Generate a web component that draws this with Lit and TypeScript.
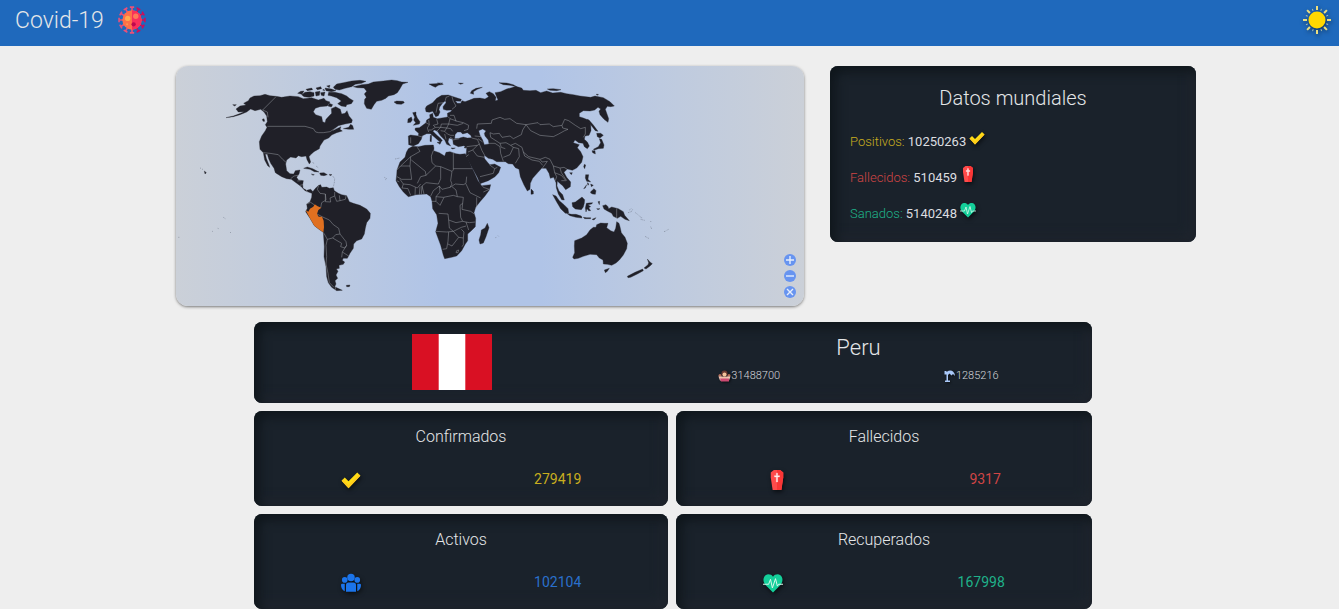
import { LitElement, html, svg, css } from "lit";
import { customElement, property } from "lit/decorators.js";

const LAND = [
  // North and Central America
  "M168 173L190 168 212 160 222 155 205 156 198 147 210 138 228 135 221 130 235 122 240 114 252 108 270 107 285 103 300 107 318 109 335 112 360 108 385 110 400 116 425 113 445 120 462 115 468 122 480 126 472 138 450 140 436 145 430 155 437 164 455 170 458 185 465 188 468 178 475 170 485 160 484 146 497 140 511 148 515 162 525 160 531 152 537 168 547 180 545 188 525 192 505 197 495 205 487 213 500 206 513 200 510 208 517 213 500 218 485 225 476 234 462 240 450 258 448 266 432 275 421 285 417 290 422 306 418 312 411 299 408 288 395 290 385 287 378 294 362 291 350 300 347 312 350 332 360 341 371 342 376 332 390 330 387 342 380 352 385 360 400 362 398 374 399 385 410 391 422 388 429 395 425 400 415 396 405 392 394 380 378 368 364 358 350 356 335 350 316 338 312 325 302 310 296 296 292 283 286 282 289 295 297 315 299 322 293 317 284 300 280 278 270 268 268 245 275 228 286 212 291 202 286 194 292 185 290 168 282 156 272 148 255 152 242 147 230 156 210 164 190 170Z",
  // South America
  "M426 398L435 386 446 376 452 374 455 382 470 381 478 385 490 383 493 392 505 400 515 404 530 407 538 425 550 430 570 436 590 447 601 460 600 475 590 488 586 505 583 522 575 537 560 542 551 552 550 565 540 580 532 595 520 595 517 601 524 606 520 613 507 616 508 625 499 627 504 634 498 645 503 655 495 662 498 672 494 680 517 691 500 692 485 682 475 668 470 650 468 620 462 590 463 560 460 517 447 508 433 497 420 475 407 455 412 445 410 432 420 425 425 412Z",
  "M529 676L540 675 538 680 530 680Z",
  // Caribbean
  "M401 325L412 321 428 326 437 331 447 336 433 335 420 328ZM449 339L462 338 472 344 462 347 452 346ZM424 342L433 344 429 346ZM478 343L486 344 480 347Z",
  // Hawaii
  "M103 333L109 338 105 342Z",
  // Arctic archipelago
  "M383 100L392 94 402 93 396 103ZM395 104L405 97 420 95 432 98 432 108 418 112 402 110ZM408 88L425 84 428 89 412 92ZM438 84L452 80 455 86 442 89ZM436 96L450 94 448 106 438 108ZM452 98L465 96 462 108 454 106ZM465 84L485 87 498 92 484 95 468 92ZM470 78L480 76 478 83ZM476 97L495 97 515 101 530 108 538 115 550 122 544 131 530 134 528 140 514 138 503 131 514 123 500 113 484 108 474 106ZM478 130L488 134 484 141 474 138ZM490 82L500 72 520 68 545 63 570 61 588 64 575 70 556 73 545 80 525 85 508 90 495 88ZM458 90L462 88 464 92ZM520 206L537 208 551 208 548 197 542 193 536 202ZM277 178L282 176 284 184 279 184ZM188 134L199 134 194 138Z",
  // Greenland, Iceland, Svalbard
  "M582 84L562 83 550 80 575 74 595 72 610 66 640 63 665 60 682 62 695 66 714 67 698 72 690 86 682 98 672 104 655 108 648 115 635 121 620 124 612 134 604 148 590 145 583 131 584 118 589 112 583 102 590 94Z",
  "M672 126L680 123 700 124 703 128 694 133 680 132ZM777 72L795 71 812 70 820 73 805 76 796 82 786 77ZM802 69L818 69 814 72Z",
  // Great Britain, Ireland
  "M728 158L738 156 738 164 742 174 750 185 748 192 730 196 737 188 731 180 734 172ZM714 177L724 171 727 180 722 187 713 188Z",
  // Eurasia
  "M715 228L722 225 745 228 746 220 735 210 736 204 748 203 758 196 768 188 770 180 780 174 779 164 788 160 790 172 802 176 820 173 833 171 832 160 842 155 846 150 830 151 820 148 819 140 828 128 826 122 818 129 809 141 807 149 810 156 805 167 797 170 793 163 788 154 778 157 768 155 766 145 770 138 788 128 800 115 815 106 835 105 850 110 874 118 872 124 856 123 862 130 872 130 876 122 885 125 897 121 912 115 930 114 945 117 956 110 948 100 958 95 970 101 978 112 976 122 984 120 978 106 975 98 992 95 1010 87 1025 83 1037 79 1055 84 1060 91 1080 92 1098 91 1112 98 1130 93 1148 99 1172 97 1190 101 1210 104 1230 108 1262 112 1275 108 1300 113 1320 125 1333 138 1322 140 1312 139 1306 148 1311 162 1316 176 1314 187 1302 178 1290 164 1287 154 1292 147 1284 142 1274 150 1260 153 1240 152 1228 160 1228 170 1240 174 1255 180 1262 192 1263 212 1257 226 1245 228 1243 238 1252 246 1258 258 1252 266 1243 260 1239 250 1226 248 1215 240 1210 248 1228 254 1222 263 1232 275 1239 290 1235 307 1220 324 1207 331 1192 327 1182 337 1190 352 1202 366 1201 380 1187 389 1178 377 1169 370 1162 363 1161 378 1167 393 1178 404 1183 420 1175 419 1165 402 1159 384 1158 368 1151 352 1141 355 1137 340 1128 325 1115 325 1104 337 1088 355 1081 370 1080 388 1072 393 1062 375 1051 350 1047 328 1036 323 1028 312 1015 311 1006 305 980 305 968 298 955 295 942 285 944 296 955 310 960 314 974 312 992 322 986 338 975 350 955 362 930 371 922 352 908 326 895 302 888 290 890 264 882 257 865 260 850 253 848 238 837 234 834 246 842 258 830 253 824 240 812 228 802 214 794 210 788 213 800 225 813 236 817 242 811 247 803 240 792 230 781 221 770 221 757 227 754 238 745 251 730 258 716 254ZM855 224L862 216 872 216 878 222 892 218 902 226 905 233 892 234 880 231 866 235 854 236ZM926 212L938 207 948 213 943 220 945 228 955 240 957 252 943 254 938 240 930 226Z",
  // Mediterranean islands
  "M781 226L785 226 784 245 780 244ZM801 247L813 246 810 253ZM843 264L856 264 848 267ZM882 262L890 259 886 265Z",
  // Russian Arctic islands
  "M901 100L905 92 918 85 937 82 922 88 910 95 911 103ZM987 68L1010 69 1030 74 1040 80 1020 76 1000 74ZM1132 87L1150 86 1173 89 1160 92 1140 91ZM1278 103L1285 103 1284 106ZM865 69L880 70 872 73Z",
  // Sakhalin, Japan
  "M1252 178L1257 180 1270 195 1284 214 1276 212 1262 194ZM1280 220L1292 220 1300 226 1290 234 1282 230ZM1288 236L1295 238 1302 255 1300 265 1285 266 1274 270 1270 268 1285 260 1292 248ZM1266 272L1275 272 1276 282 1268 278Z",
  // Taiwan, Hainan, Sri Lanka
  "M1243 313L1247 315 1244 326 1241 320ZM1199 338L1207 338 1204 344ZM1083 387L1090 394 1090 402 1083 403Z",
  // Philippines
  "M1247 344L1256 344 1254 358 1262 366 1250 364 1246 354ZM1262 372L1270 376 1264 380ZM1252 368L1257 372 1254 376ZM1262 395L1272 386 1278 392 1276 403 1268 402 1262 399ZM1241 386L1250 374 1246 384Z",
  // Indonesia and New Guinea
  "M1148 404L1158 408 1168 422 1182 434 1194 446 1196 459 1186 460 1172 446 1160 426ZM1190 460L1205 463 1218 463 1234 468 1236 474 1218 472 1200 467ZM1206 428L1216 426 1227 418 1236 411 1244 419 1243 430 1240 441 1234 449 1216 447 1208 440ZM1249 430L1255 429 1268 428 1265 432 1254 434 1262 440 1256 443 1262 452 1256 452 1251 446 1248 456 1246 444ZM1240 472L1250 473 1262 473 1262 476 1244 476ZM1266 478L1278 473 1272 480ZM1284 425L1289 424 1288 434ZM1280 446L1290 446 1284 449Z",
  "M1298 437L1308 434 1314 440 1316 446 1325 441 1345 446 1360 455 1364 466 1378 482 1365 478 1352 469 1342 475 1330 469 1325 460 1312 453 1302 447Z",
  // Australia, Tasmania, New Zealand
  "M1214 542L1235 534 1250 524 1260 510 1270 502 1278 502 1280 494 1292 489 1304 490 1314 490 1310 503 1322 512 1332 516 1337 505 1340 485 1347 490 1350 500 1354 518 1365 532 1372 550 1370 566 1360 585 1348 600 1338 609 1325 616 1312 613 1300 612 1299 600 1288 594 1280 584 1260 583 1240 589 1225 595 1212 597 1208 592 1214 578 1213 558Z",
  "M1303 630L1318 625 1312 634 1306 638ZM1372 649L1395 637 1418 627 1420 632 1402 642 1382 652 1374 653ZM1422 624L1434 614 1436 608 1432 597 1440 606 1447 611 1440 618 1428 627Z",
  // Africa and Madagascar
  "M715 266L728 259 745 260 765 256 790 255 792 264 791 272 808 278 824 288 828 277 840 275 858 281 870 283 886 281 894 296 905 322 914 340 924 362 935 377 962 374 958 390 945 408 930 425 917 442 912 458 917 475 916 500 904 512 893 522 893 542 886 552 875 572 860 588 845 592 824 596 820 586 812 556 797 515 804 490 800 464 788 446 786 424 782 410 770 402 755 403 738 404 715 410 700 396 688 380 678 362 680 345 681 330 690 306 705 292 709 277Z",
  "M952 490L957 503 948 530 940 549 930 552 927 540 932 524 934 510 945 504Z",
];

// Small island groups, drawn as faint marks
const ISLETS =
  "M96 327L100 329M90 324L93 325M126 513L130 516M160 472L166 476M143 505L146 506M180 517L183 518M25 532L28 532M428 306L432 312M438 318L446 324M488 348L494 356 493 368 490 380M643 352L650 356 645 360M675 297L690 294M976 533L980 532M984 527L986 529M1374 458L1384 455 1388 448M1378 450L1384 446M1396 458L1404 464M1406 466L1414 473 1418 474M1412 478L1424 481M1442 483L1443 488M1442 500L1445 507M1425 529L1432 533 1438 536M1482 515L1488 513M1490 511L1496 508";

const PERU = "M407 451L415 455 420 446 430 440 434 433 443 439 454 443 445 450 441 462 446 470 456 470 461 482 462 502 460 517 447 508 433 497 420 475Z";

const BORDERS = [
  "M278 150L318 110M278 150L292 156 294 172M292 199L405 199 430 206 437 216 446 218 460 218 480 215 494 206",
  "M280 278L300 280 325 284 338 298 348 307M362 356L372 348 384 346M382 363L392 362M390 376L398 374M409 390L412 397",
  "M446 377L442 388 450 400 466 402 468 420 455 428 452 443M410 432L422 427 432 434M466 402L466 425 482 426 480 414 494 408 494 396M494 408L500 424 510 422 508 406M510 422L526 418 528 408M441 462L456 470 478 480 490 494 506 505 510 522 497 524 488 534 472 538 462 520M488 534L515 550 512 560 524 564 530 556 528 545 510 522M530 556L517 576 515 592M517 576L536 588M472 538L468 556 470 590 468 612 474 640 478 668 492 682M498 678L495 690",
  // Africa
  "M722 290L750 274 742 262M722 290L692 318M680 330L692 318 720 318 722 290M720 318L725 358 695 358 681 350M724 300L766 334 768 346 752 350 742 370M790 272L784 288 786 308 797 318 768 346M797 318L812 320 846 334 850 330 850 278M850 326L906 326M812 320L812 356 805 372 768 368M846 334L842 362 846 372 840 382 816 388 808 378M840 382L856 372 880 374 888 370 890 350M808 378L810 396 798 410 820 412 850 406 862 410 880 412 878 430M862 410L858 390 846 380M888 372L900 398 932 414M940 396L958 388 940 382 936 376M920 412L920 444M878 430L876 448 902 454 913 462M878 430L870 436 872 472 878 484 858 488 836 480 834 462 806 460M798 410L798 424 786 424M798 424L810 436 822 412M878 484L898 488 916 486M888 486L896 510M836 480L838 504 850 514 830 516 798 514M850 514L874 502 888 498M850 514L866 532 880 534 882 516 874 508M836 516L834 544 830 566 818 568M834 552L846 558 866 532M880 534L880 554 876 560M860 572L866 570 864 578 858 578ZM752 372L742 384 720 374 700 372 690 358M700 372L696 384 714 386 722 406M735 406L736 382M748 404L750 380M754 402L756 378 768 368M756 378L762 402M782 408L790 392 808 378M688 366L680 362",
  // Europe
  "M722 232L722 250M745 228L758 231M768 188L778 194 772 204 776 216M778 194L776 180M800 178L804 192 790 196 796 202 812 202 814 192 836 192 840 176 834 170M796 202L784 210 776 210M812 202L800 214M812 202L830 204 836 192M830 204L824 214 832 222 842 226 852 226M824 214L812 212 M824 222L828 238M840 232L848 236M840 176L862 184 880 188 896 196 894 208 882 212M836 192L862 196 880 190M848 214L842 206 830 204M846 148L858 138 850 124 846 110M820 128L804 130 798 158M826 122L828 112 838 108M840 166L852 166 858 184",
  // Asia
  "M920 206L922 192 964 190 966 180 990 172 1004 178 1020 176 1040 190 1068 194M1068 194L1058 210 1054 224 1030 236 1020 228 996 232 988 220 970 222 960 218M1068 194L1080 192 1104 188 1110 194 1138 192 1150 200 1176 196 1184 178 1196 182 1216 196 1232 206 1246 202 1246 222 1240 232M1068 194L1082 212 1110 226 1150 230 1166 222 1184 212 1194 208 1178 204 1176 196M960 218L962 232 990 250 1008 248 1022 256 1036 250 1056 262 1060 276 1076 290 1110 298 1126 292 1140 298 1150 318 1170 324 1182 322 1192 328M955 250L975 250 990 260 992 280 1000 304M1000 292L1020 284 1030 262 1022 256M990 250L994 262 1006 266M1030 262L1046 266 1048 290 1036 310M1060 276L1064 288 1086 300 1108 304 1118 316M1110 298L1116 306 1132 304 1116 326M1150 318L1154 338 1160 350 1156 362M1154 338L1174 346 1186 360M1170 324L1174 338 1190 362M1174 362L1188 362",
  "M848 240L868 236M905 234L922 238 928 252 922 256 890 260M914 228L936 230M924 236L938 246M928 252L936 272 944 286M922 256L908 270 894 276M908 270L922 288 944 292M888 290L896 284M958 314L974 326 970 340 930 350M974 326L982 322M1340 446L1340 475",
];

type IconName = "check" | "coffin" | "heart" | "people";

const ICONS = {
  check: svg`<path d="M1 17l5-5 6 6L26 4l5 5-19 20z" fill="#ffdd15"/><path d="M1 17l2-2 9 9L29 7l2 2-19 20z" fill="#ffcb1c"/>`,
  coffin: svg`<path d="M11 0h10l5 4v8l-3 20H9L6 12V4z" fill="#ff4b4b"/><path d="M16 0h5l5 4v8l-3 20h-7z" fill="#fa3636"/><path d="M15 5h2v4h3v2h-3v8h-2v-8h-3V9h3z" fill="#fff0f0" stroke="#fff0f0" stroke-width=".6"/>`,
  heart: svg`<path d="M16 31L4 19C-2 12 1 3 8 2c4 0 6 1 8 4 2-3 4-4 8-4 7 1 10 10 4 17z" fill="#14cf9a"/><path d="M0 18h9l3-8 3 14 5-15 3 12 2-3h7" fill="none" stroke="#d8f8ec" stroke-width="1.6"/>`,
  people: svg`<g fill="#1b74ea"><circle cx="16" cy="7" r="6"/><circle cx="6" cy="11" r="4.500"/><circle cx="26" cy="11" r="4.500"/><path d="M8 30V19q0-4 4-4h8q4 0 4 4v11zM6 29q-6-3-6-10 0-2 2-2h4zM26 29q6-3 6-10 0-2-2-2h-4z"/></g>`,
};

const virusIcon = html`
  <svg class="virus" viewBox="0 0 52 52" aria-hidden="true">
    <g stroke-width="3" fill="none">
      ${[0, 30, 60, 90, 120, 150, 180, 210, 240, 270, 300, 330].map(
        (a) => svg`<path d="M26 10V2M22 2h8" stroke=${a > 0 && a < 180 ? "#c80f5c" : "#e8507a"} transform="rotate(${a} 26 26)"/>`,
      )}
    </g>
    <circle cx="26" cy="26" r="18" fill="#ff7048" />
    <path d="M26 8a18 18 0 0 1 0 36z" fill="#f92f5c" />
    <circle cx="18" cy="23" r="5" fill="#ffa94d" />
    <circle cx="33" cy="19" r="5" fill="#ff7a58" />
    <circle cx="29" cy="34" r="4" fill="#c0094d" />
    <circle cx="17" cy="34" r="2" fill="#ff9650" />
  </svg>`;

const sunIcon = html`
  <svg class="sun" viewBox="0 0 56 56" aria-hidden="true">
    ${[0, 45, 90, 135, 180, 225, 270, 315].map(
      (a) => svg`<path d="M28 0v8" stroke="#ecdf80" stroke-width="4" transform="rotate(${a} 28 28)"/>
        <path d="M28 4v4" stroke="#a9bfae" stroke-width="2" transform="rotate(${a + 22} 28 28)"/>`,
    )}
    <circle cx="28" cy="28" r="17" fill="#ffd800" />
  </svg>`;

@customElement("stat-icon")
export class StatIcon extends LitElement {
  @property() name: IconName = "check";

  static styles = css`
    :host {
      display: inline-block;
      width: 20px;
      height: 20px;
    }
    .glyph {
      display: block;
      width: 100%;
      height: 100%;
      overflow: visible;
      filter: drop-shadow(1px 2px 2px rgba(0, 0, 0, 0.6));
    }
  `;

  render() {
    return html`<svg class="glyph" viewBox="0 0 32 32" aria-hidden="true">${ICONS[this.name]}</svg>`;
  }
}

@customElement("world-map")
export class WorldMap extends LitElement {
  static styles = css`
    :host {
      display: block;
      position: relative;
      border-radius: 12px;
      background: linear-gradient(90deg, #cbd0d8 0%, #bfcbdf 20%, #b0c4e7 42%, #b0c4e7 58%, #bfcbdf 80%, #cbd0d8 100%);
      box-shadow: 0 1px 3px rgba(0, 0, 0, 0.5);
    }
    .map {
      display: block;
      width: 100%;
      height: auto;
    }
    .land {
      fill: #202028;
      fill-rule: evenodd;
      stroke: #202028;
      stroke-width: 1;
      stroke-linejoin: round;
    }
    .islets {
      fill: none;
      stroke: #6a7280;
      stroke-width: 1.6;
      stroke-dasharray: 3 2;
    }
    .border {
      fill: none;
      stroke: #a2a6ad;
      stroke-width: 1.4;
      stroke-linejoin: round;
    }
    .selected {
      fill: #e07020;
    }
    .controls {
      position: absolute;
      right: 8px;
      bottom: 8px;
      display: grid;
      gap: 4px;
    }
    .control {
      width: 12px;
      height: 12px;
      padding: 0;
      border: 0;
      border-radius: 50%;
      background: #6794f0;
      cursor: pointer;
    }
    .sign {
      display: block;
      stroke: #e6eefc;
      stroke-width: 1.4;
    }
  `;

  render() {
    const control = (label: string, d: string) => html`
      <button class="control" type="button" aria-label=${label}>
        <svg class="sign" width="12" height="12" viewBox="0 0 12 12"><path d=${d} /></svg>
      </button>`;
    return html`
      <svg class="map" viewBox="18 18 1884 720" role="img" aria-label="Mapa mundial">
        ${LAND.map((d) => svg`<path class="land" d=${d} />`)}
        <path class="islets" d=${ISLETS} />
        ${BORDERS.map((d) => svg`<path class="border" d=${d} />`)}
        <path class="selected" d=${PERU} />
      </svg>
      <div class="controls">
        ${control("Acercar", "M6 2v8M2 6h8")}
        ${control("Alejar", "M2 6h8")}
        ${control("Restablecer", "M3 3l6 6M9 3l-6 6")}
      </div>`;
  }
}

@customElement("app-root")
export class AppRoot extends LitElement {
  static styles = css`
    :host {
      display: block;
      min-height: 100vh;
      background: #eee;
      color: #e4e6e8;
      font-family: Roboto, "Liberation Sans", sans-serif;
      font-weight: 300;
    }
    h1,
    h2,
    p {
      margin: 0;
      font-weight: 300;
    }
    .bar {
      display: flex;
      justify-content: space-between;
      align-items: flex-start;
      height: 46px;
      padding: 0 8px 0 15px;
      box-sizing: border-box;
      background: #1f69bc;
    }
    .brand {
      display: flex;
      align-items: center;
      gap: 14px;
      height: 40px;
      font-size: 23px;
    }
    .virus {
      width: 28px;
      height: 28px;
    }
    .theme {
      display: flex;
      align-items: center;
      height: 40px;
      padding: 0;
      border: 0;
      background: none;
      cursor: pointer;
    }
    .sun {
      width: 28px;
      height: 28px;
      overflow: visible;
      filter: drop-shadow(1px 2px 2px rgba(0, 0, 0, 0.5));
    }
    .overview {
      display: grid;
      grid-template-columns: 628fr 366fr;
      column-gap: 26px;
      align-items: start;
      margin: 20px 143px 16px 176px;
    }
    .card {
      box-sizing: border-box;
      border-radius: 8px;
      background: #1a222b;
      box-shadow: inset 5px 5px 12px #0f161b, inset -5px -5px 12px #21262f;
    }
    .world {
      padding: 18px 20px 10px;
    }
    .world-title {
      font-size: 20px;
      line-height: 28px;
      text-align: center;
      margin-bottom: 12px;
    }
    .total {
      height: 36px;
      font-size: 13px;
      line-height: 36px;
    }
    .total-value {
      font-weight: 400;
      color: #dcdee0;
    }
    .total-icon {
      width: 16px;
      height: 16px;
    }
    .yellow {
      color: #c9ae1e;
    }
    .red {
      color: #d04545;
    }
    .green {
      color: #1fb28a;
    }
    .blue {
      color: #2a70cc;
    }
    .details {
      display: grid;
      grid-template-columns: 414fr 416fr;
      gap: 8px;
      margin: 0 247px 0 254px;
    }
    .country {
      grid-column: 1 / -1;
      display: grid;
      grid-template-columns: 371fr 443fr;
      padding: 12px 12px 13px;
    }
    .flag {
      justify-self: center;
      width: 80px;
      height: 56px;
    }
    .country-name {
      font-size: 22px;
      line-height: 28px;
      text-align: center;
    }
    .facts {
      display: flex;
      justify-content: space-around;
      line-height: 28px;
      font-size: 11px;
    }
    .fact {
      display: flex;
      align-items: center;
      color: #d4d7da;
    }
    .fact-icon {
      width: 13px;
      height: 13px;
      filter: drop-shadow(1px 1px 1px rgba(0, 0, 0, 0.6));
    }
    .stat {
      padding: 14px 0 12px;
    }
    .stat-title {
      font-size: 16px;
      line-height: 24px;
      text-align: center;
      margin-bottom: 17px;
    }
    .stat-row {
      display: flex;
      justify-content: space-around;
      align-items: flex-end;
      height: 28px;
    }
    .stat-icon {
      margin-bottom: 4px;
    }
    .stat-value {
      font-size: 14px;
      line-height: 30px;
      font-weight: 400;
    }
  `;

  private total(label: string, value: string, icon: IconName, tone: string) {
    return html`<p class="total">
      <span class=${tone}>${label}:</span> <span class="total-value">${value}</span>
      <stat-icon class="total-icon" name=${icon}></stat-icon>
    </p>`;
  }

  private stat(label: string, value: string, icon: IconName, tone: string) {
    return html`<section class="card stat">
      <h2 class="stat-title">${label}</h2>
      <div class="stat-row">
        <stat-icon class="stat-icon" name=${icon}></stat-icon>
        <span class="stat-value ${tone}">${value}</span>
      </div>
    </section>`;
  }

  render() {
    return html`
      <header class="bar">
        <h1 class="brand">Covid-19 ${virusIcon}</h1>
        <button class="theme" type="button" aria-label="Cambiar tema">${sunIcon}</button>
      </header>
      <main>
        <div class="overview">
          <world-map></world-map>
          <section class="card world">
            <h2 class="world-title">Datos mundiales</h2>
            ${this.total("Positivos", "10250263", "check", "yellow")}
            ${this.total("Fallecidos", "510459", "coffin", "red")}
            ${this.total("Sanados", "5140248", "heart", "green")}
          </section>
        </div>
        <div class="details">
          <section class="card country">
            <svg class="flag" viewBox="0 0 80 56" role="img" aria-label="Bandera de Peru">
              <path fill="#d91023" d="M0 0h80v56H0z" />
              <path fill="#fff" d="M26.700 0h26.600v56H26.700z" />
            </svg>
            <div>
              <h2 class="country-name">Peru</h2>
              <div class="facts">
                <span class="fact">
                  <svg class="fact-icon" viewBox="0 0 26 26" aria-hidden="true">
                    <circle cx="13" cy="7" r="6" fill="#6b3a32" />
                    <circle cx="4" cy="11" r="3" fill="#b5705c" />
                    <circle cx="22" cy="11" r="3" fill="#b5705c" />
                    <circle cx="13" cy="9" r="4" fill="#f2c49c" />
                    <path d="M1 13h7v8H4zM18 13h7l-3 8h-4z" fill="#f0c8b8" />
                    <path d="M7 13h12v7H7z" fill="#f0bfa8" />
                    <path d="M4 17h18v6H6z" fill="#cc4a72" />
                  </svg>31488700</span>
                <span class="fact">
                  <svg class="fact-icon" viewBox="0 0 26 26" aria-hidden="true">
                    <path d="M3 2h4v2q8-5 13-1 4 3 4 9l-4-4-3 3-4-4-3 3v11h4v3H4v-3h3V9H3z" fill="#a9c8f8" />
                  </svg>1285216</span>
              </div>
            </div>
          </section>
          ${this.stat("Confirmados", "279419", "check", "yellow")}
          ${this.stat("Fallecidos", "9317", "coffin", "red")}
          ${this.stat("Activos", "102104", "people", "blue")}
          ${this.stat("Recuperados", "167998", "heart", "green")}
        </div>
      </main>`;
  }
}
